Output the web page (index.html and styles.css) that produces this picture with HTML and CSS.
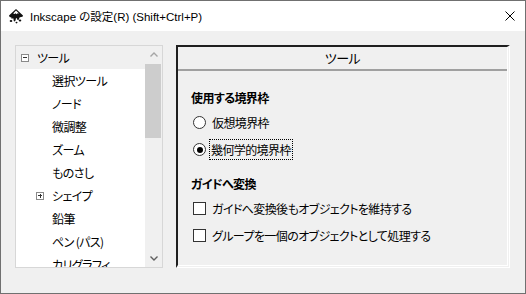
FILE: index.html
```html
<!DOCTYPE html>
<html lang="ja">
<head>
  <meta charset="UTF-8" />
  <title>Inkscape の設定</title>
  <link rel="stylesheet" href="styles.css">
</head>
<body>
  <div class="window">
    <div class="titlebar">
      <svg class="title-icon" viewBox="0 0 16 16">
        <path d="M8 1 L15 7.5 Q15 9 13 9 L11.5 9.5 Q11 12 10 12 Q9 12 9 10.5 L8 10 Q7.5 13.5 6.5 13.5 Q5.5 13.5 5.5 11 L5 10 Q4.5 11 3.5 10.5 Q3 10 3.5 9.5 Q1 9.5 1 7.5 Z" fill="#111"/>
        <path d="M8 2.6 L11 5.4 L9.6 5.2 L8.6 6.2 L7.6 5.2 L6.4 6 L5.2 5.4 Z" fill="#fff"/>
        <ellipse cx="3" cy="13" rx="1.3" ry="1" fill="#111"/>
        <ellipse cx="12" cy="12.5" rx="1.3" ry="1" fill="#111"/>
        <ellipse cx="8.5" cy="14.6" rx="1" ry="0.8" fill="#111"/>
      </svg>
      <div class="title">Inkscape の設定(R) (Shift+Ctrl+P)</div>
      <svg class="close" viewBox="0 0 10 10">
        <path d="M0.5 0.5 L9.5 9.5 M9.5 0.5 L0.5 9.5" stroke="#000" stroke-width="1" fill="none"/>
      </svg>
    </div>

    <div class="content">
      <div class="tree">
        <div class="tree-list">
          <div class="row selected"><span class="exp minus"></span>ツール</div>
          <div class="row child"><span class="exp none"></span>選択ツール</div>
          <div class="row child"><span class="exp none"></span>ノード</div>
          <div class="row child"><span class="exp none"></span>微調整</div>
          <div class="row child"><span class="exp none"></span>ズーム</div>
          <div class="row child"><span class="exp none"></span>ものさし</div>
          <div class="row child"><span class="exp plus"></span>シェイプ</div>
          <div class="row child"><span class="exp none"></span>鉛筆</div>
          <div class="row child"><span class="exp none"></span>ペン (パス)</div>
          <div class="row child"><span class="exp none"></span>カリグラフィ</div>
        </div>
        <div class="scrollbar">
          <div class="arrow up">
            <svg viewBox="0 0 8 5"><path d="M0.5 4.5 L4 1 L7.5 4.5" stroke="#a6a6a6" stroke-width="1.4" fill="none"/></svg>
          </div>
          <div class="thumb"></div>
          <div class="track"></div>
          <div class="arrow down">
            <svg viewBox="0 0 8 5"><path d="M0.5 0.5 L4 4 L7.5 0.5" stroke="#606060" stroke-width="1.4" fill="none"/></svg>
          </div>
        </div>
      </div>

      <div class="frame">
        <div class="frame-header">ツール</div>
        <div class="frame-body">
          <div class="section">
            <div class="section-title">使用する境界枠</div>
            <div class="option"><span class="radio"></span><span>仮想境界枠</span></div>
            <div class="option"><span class="radio checked"></span><span class="focus">幾何学的境界枠</span></div>
          </div>
          <div class="section">
            <div class="section-title">ガイドへ変換</div>
            <div class="option"><span class="check"></span><span>ガイドへ変換後もオブジェクトを維持する</span></div>
            <div class="option"><span class="check"></span><span>グループを一個のオブジェクトとして処理する</span></div>
          </div>
        </div>
      </div>
    </div>
  </div>
</body>
</html>
```

FILE: styles.css
```css
* {
  box-sizing: border-box;
}
body {
  margin: 0;
  font-family: "Noto Sans CJK JP", sans-serif;
  font-size: 12px;
  font-feature-settings: "palt";
  letter-spacing: -0.6px;
  color: #000;
  background: #fff;
}
.window {
  width: 526px;
  height: 294px;
  border: 1px solid #707070;
  background: #f0f0f0;
  display: flex;
  flex-direction: column;
}
.titlebar {
  height: 30px;
  background: #fff;
  display: flex;
  align-items: center;
  padding-left: 7px;
}
.title-icon {
  width: 16px;
  height: 16px;
  margin-right: 6px;
}
.title {
  flex: 1;
  font-family: "Liberation Sans", "Noto Sans CJK JP", sans-serif;
  font-size: 11.5px;
  letter-spacing: 0;
  color: #000;
}
.close {
  width: 10px;
  height: 10px;
  margin-right: 10px;
}
.content {
  display: flex;
  gap: 13px;
  padding: 14px 14px 0 14px;
}

/* tree on the left */
.tree {
  width: 148px;
  height: 223px;
  border: 1px solid #d7d7d7;
  background: #fff;
  display: flex;
  overflow: hidden;
}
.tree-list {
  flex: 1;
}
.row {
  height: 23px;
  display: flex;
  align-items: center;
  padding-left: 5px;
  white-space: nowrap;
}
.row.selected {
  background: #f0f0f0;
}
.row.child {
  padding-left: 20px;
}
.exp {
  width: 8px;
  height: 8px;
  margin-right: 8px;
  position: relative;
  flex: none;
}
.exp.minus, .exp.plus {
  border: 1px solid #8a8a8a;
  background: #fff;
}
.exp.minus::before, .exp.plus::before {
  content: "";
  position: absolute;
  left: 1px;
  top: 2.5px;
  width: 4px;
  height: 1px;
  background: #333;
}
.exp.plus::after {
  content: "";
  position: absolute;
  left: 2.5px;
  top: 1px;
  width: 1px;
  height: 4px;
  background: #333;
}
.scrollbar {
  width: 17px;
  background: #f0f0f0;
  display: flex;
  flex-direction: column;
}
.arrow {
  height: 17px;
  display: flex;
  align-items: center;
  justify-content: center;
}
.arrow svg {
  width: 8px;
  height: 5px;
}
.thumb {
  height: 74px;
  margin: 1px 1px 0 0;
  background: #cdcdcd;
}
.track {
  flex: 1;
}

/* page frame on the right */
.frame {
  width: 334px;
  height: 223px;
  border-top: 2px solid #1f1f1f;
  border-left: 2px solid #1f1f1f;
  border-right: 3px double #fff;
  border-bottom: 3px double #fff;
}
.frame-header {
  height: 24px;
  line-height: 22px;
  border-bottom: 2px solid #a0a0a0;
  text-align: center;
  font-size: 13px;
}
.frame-body {
  padding: 18px 0 0 13px;
}
.section + .section {
  margin-top: 12px;
}
.section-title {
  font-weight: bold;
  height: 18px;
  line-height: 18px;
  margin-bottom: 2px;
}
.option {
  height: 27px;
  display: flex;
  align-items: center;
  gap: 6px;
  padding-left: 2px;
}
.radio {
  width: 13px;
  height: 13px;
  border: 1px solid #333;
  border-radius: 50%;
  background: #fff;
  position: relative;
}
.radio.checked::after {
  content: "";
  position: absolute;
  left: 2.5px;
  top: 2.5px;
  width: 6px;
  height: 6px;
  border-radius: 50%;
  background: #000;
}
.check {
  width: 13px;
  height: 13px;
  border: 1px solid #333;
  background: #fff;
}
.focus {
  outline: 1px dotted #000;
  padding: 1px 1px;
  margin-left: -2px;
}
```
